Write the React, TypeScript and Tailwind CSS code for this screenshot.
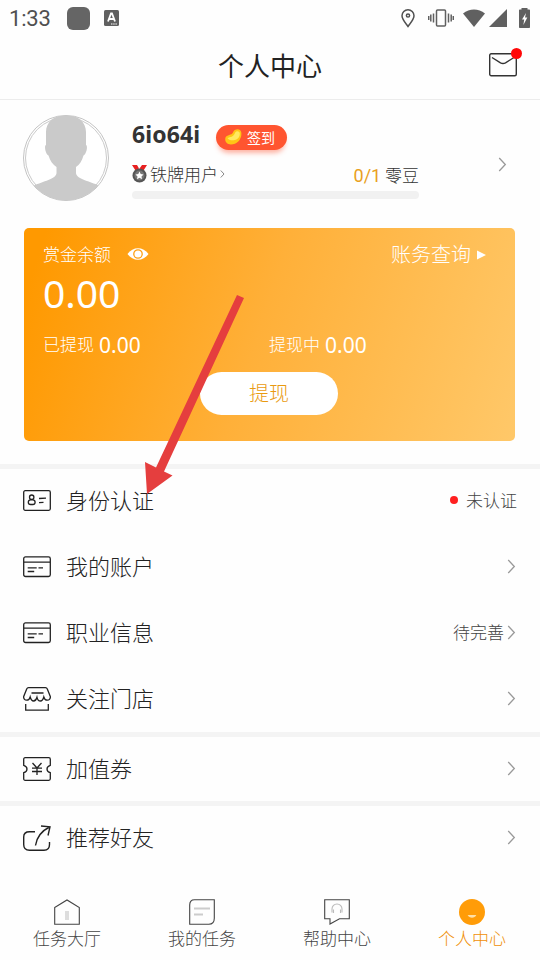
import React from 'react';

type IconProps = { className?: string };

const Chevron: React.FC<IconProps> = ({ className }) => (
  <svg viewBox="0 0 9 16" fill="none" stroke="currentColor" strokeWidth="1.400" className={className}>
    <path d="M1 1l6.500 7L1 15" />
  </svg>
);

const IdCardIcon = () => (
  <svg viewBox="0 0 28 24" fill="none" stroke="#222" strokeWidth="1.300" className="w-7 h-6">
    <rect x="0.700" y="1.700" width="26.600" height="19.600" rx="1.500" />
    <circle cx="8.700" cy="8.200" r="2.200" />
    <rect x="5.300" y="10.900" width="6.800" height="4.600" rx="2.300" />
    <path d="M16 9.500l7-.4M16 13.700l4.500-.3" />
  </svg>
);

const CardIcon = () => (
  <svg viewBox="0 0 28 24" fill="none" stroke="#222" strokeWidth="1.300" className="w-7 h-6">
    <rect x="0.700" y="1.900" width="26.600" height="19.600" rx="1.800" />
    <path d="M1 7.200h26M4.700 12.900h9M15.500 12.900h4.500M4.700 16.500h6.500" />
  </svg>
);

const StoreIcon = () => (
  <svg viewBox="0 0 28 24" fill="none" stroke="#222" strokeWidth="1.300" className="w-7 h-6">
    <path d="M5.500 0.700h17c1 0 1.400.3 1.800 1.200l3 7.500c.4 2-1 3.800-3 3.800-2 0-3-1.300-3.500-3.200-.6 2.200-1.700 4-3.400 4s-2.900-1.600-3.400-3.700c-.6 2.100-1.700 3.700-3.400 3.700s-2.800-1.800-3.400-4c-.5 1.900-1.600 3.200-3.500 3.200-2 0-3.400-1.800-3-3.800l3-7.500C4.100 1 4.600.7 5.500.7z" />
    <path d="M8.500 6h12M2.700 17v6.200h22.600V17" />
  </svg>
);

const CouponIcon = () => (
  <svg viewBox="0 0 28 24" fill="none" stroke="#222" strokeWidth="1.300" className="w-7 h-6">
    <path d="M.7 8.300V2.200C.7 1.300 1.200.7 2.200.7h23.600c1 0 1.500.6 1.500 1.500v6.100c-2 .6-3.300 2-3.300 3.700s1.300 3.100 3.300 3.700v6.100c0 .9-.5 1.500-1.500 1.500H2.200c-1 0-1.500-.6-1.500-1.500v-6.100C2.700 15.100 4 13.700 4 12S2.700 8.900.7 8.300z" />
    <path d="M9.500 6l4.500 5 4.500-5M9 11.200h10M9 14.500h10M14 11v7" />
  </svg>
);

const ShareIcon = () => (
  <svg viewBox="0 0 28 26" fill="none" stroke="#222" strokeWidth="1.400" className="w-7 h-[26px]">
    <path d="M12 6.700H6.500C3 6.700.7 8.500.7 12v7.500c0 3.500 2.300 5.800 5.800 5.800H21c3.500 0 5.500-2.300 5.500-5.800V17" />
    <path d="M12.500 20.500c1-7 5-14 14-18.500M18 1l9 .8-2 8.700" />
  </svg>
);

const StatusBar = () => (
  <div className="flex h-9 items-center justify-between pl-[9px] pr-[10px] font-[Roboto]">
    <div className="flex items-center">
      <span className="mt-[2px] w-[42px] text-[22px] leading-9 tracking-[-0.2px] text-[#505050]">1:33</span>
      <span className="ml-4 size-[23px] rounded-[6px] bg-[#656565]" />
      <svg viewBox="0 0 15 16" className="ml-[14px] h-4 w-[15px]">
        <rect width="15" height="16" rx="1.500" fill="#606060" />
        <path d="M4 11.500l3-8h1l3 8M5.200 9h4.800" fill="none" stroke="#fff" strokeWidth="1.800" />
        <path d="M7 14h6.500" stroke="#fff" strokeDasharray="1.500 .7" />
      </svg>
    </div>
    <div className="flex items-center text-[#606060]">
      <svg viewBox="0 0 14 19" fill="none" stroke="#505050" strokeWidth="1.500" className="h-[19px] w-[14px]">
        <path d="M7 17.500C4.500 14 1 10.400 1 6.800a6 6 0 0 1 12 0c0 3.600-3.500 7.200-6 10.700z" />
        <circle cx="7" cy="6.500" r="1.600" />
      </svg>
      <svg viewBox="0 0 26 18" fill="none" stroke="currentColor" strokeWidth="1.500" className="ml-[13px] h-[18px] w-[26px]">
        <rect x="8.500" y="1" width="9" height="16" rx="1" />
        <path d="M5.500 4.500v9M2.800 5.500v7M.7 7v4M20.500 4.500v9M23.200 5.500v7M25.300 7v4" />
      </svg>
      <svg viewBox="0 0 22 18" fill="currentColor" className="ml-[9px] h-[18px] w-[22px]">
        <path d="M0 4.500C6.500-1 15.500-1 22 4.500L11 18z" />
      </svg>
      <svg viewBox="0 0 18 18" fill="currentColor" className="ml-1 size-[18px]">
        <path d="M18 0v18H0z" />
      </svg>
      <svg viewBox="0 0 11 20" className="ml-3 h-5 w-[11px]">
        <path d="M2.500 0h6v1.500H10c.6 0 1 .4 1 1V19c0 .6-.4 1-1 1H1c-.6 0-1-.4-1-1V2.500c0-.6.4-1 1-1h1.500z" fill="currentColor" />
        <path d="M7 5L3 11.500h2.200L4.400 17 8.300 9.500H6z" fill="#fff" />
      </svg>
    </div>
  </div>
);

const Header = () => (
  <header className="relative flex h-16 items-center justify-center border-b border-[#ececec] pb-[5px]">
    <h1 className="text-[26px] leading-10 text-[#222]">个人中心</h1>
    <div className="absolute right-[23px] top-[17px]">
      <svg viewBox="0 0 28 24" fill="none" stroke="#333" strokeWidth="1.400" className="h-6 w-7">
        <rect x="0.700" y="0.700" width="26.600" height="22" rx="1.500" />
        <path d="M3 4.500l8.500 5.300c1.700.9 3.300.9 5 0L25 4.500" />
      </svg>
      <span className="absolute -right-[5px] -top-[5px] size-[11px] rounded-full bg-[#ff0808]" />
    </div>
  </header>
);

const Avatar = () => (
  <svg viewBox="0 0 88 88" className="size-[88px]">
    <defs>
      <clipPath id="avatar">
        <circle cx="44" cy="44" r="42.500" />
      </clipPath>
    </defs>
    <circle cx="44" cy="44" r="42.500" fill="#fff" stroke="#c4c4c4" />
    <circle cx="44" cy="44" r="40.500" fill="none" stroke="#cacaca" />
    <path
      clipPath="url(#avatar)"
      fill="#cacaca"
      d="M44 1C32 1 24 8 24 18v13c-2 .5-.7 8.500 2.500 10.500C28 47 31 50.500 34.500 53v6c0 6-14 8.500-22.500 12.500V88h65V71.500C68.500 67.500 54 65 54 59v-6c3.500-2.500 6-6 7.500-11.500C64.700 39.500 66 31.500 64 31V18C64 8 56 1 44 1z"
    />
  </svg>
);

const Profile = () => (
  <section className="flex h-32 pl-[22px] pr-[33px] pt-[14px]">
    <Avatar />
    <div className="ml-[22px] w-[287px] pt-1">
      <div className="flex items-center">
        <span className="w-[84px] font-['Noto_Sans'] text-[23px] font-bold leading-8 tracking-[0.1px] text-[#333]">
          6io64i
        </span>
        <span className="mt-[6px] flex h-[25px] w-[71px] items-center rounded-full bg-[#ff5530] pb-px pl-[9px] text-sm text-white shadow-[0_5px_5px_-2px_rgba(255,85,48,0.45)]">
          <svg viewBox="0 0 17 16" className="mr-[5px] h-4 w-[17px]">
            <path d="M8 3.500C9.500-.5 15.500-1 16.300 3.500 17.200 10 12 15.500 6 15.500 1 15.500-.5 11.500.5 8.500 1.800 5.500 6.500 6.500 8 3.500z" fill="#ffc516" />
            <path d="M10 4c1-2.500 4.300-2.300 4.800.2.300 3.500-2 6-5 6.800C7 11.800 3.500 11 2.500 9 5.500 8 8.500 8 10 4z" fill="#ffe960" />
          </svg>
          签到
        </span>
      </div>
      <div className="mt-3 flex h-6 items-center justify-between text-[17px] font-light text-[#333]">
        <span className="flex items-center">
          <svg viewBox="0 0 15 18" className="mr-[3px] h-[18px] w-[15px]">
            <path d="M0 0h5l2 3.500L3.500 5.500zM15 0h-5L7.500 3.500l4 2z" fill="#e82020" />
            <circle cx="7.500" cy="10.500" r="7" fill="#555" />
            <circle cx="7.500" cy="10.500" r="5" fill="#777" />
            <path d="M7.500 6.500l1.200 2.500 2.800.4-2 2 .5 2.800-2.500-1.400L5 14.200l.5-2.800-2-2 2.800-.4z" fill="#fff" />
          </svg>
          铁牌用户
          <Chevron className="ml-[2px] h-[8px] w-[5px] text-[#555]" />
        </span>
        <span className="pt-1">
          <span className="font-[Roboto] text-lg font-normal text-[#e9a020]">0/1</span> 零豆
        </span>
      </div>
      <div className="mt-[5px] h-2 rounded-full bg-[#f1f1f1]" />
    </div>
    <Chevron className="ml-auto mt-[43px] h-[15px] w-[9px] text-[#999]" />
  </section>
);

const BalanceCard = () => (
  <section className="ml-6 h-[213px] w-[491px] rounded-[5px] bg-[linear-gradient(108deg,#ff9900_4%,#ffb039_48%,#ffc869_100%)] px-[19px] pt-3 text-white">
    <div className="flex h-7 items-center text-[17px] font-light">
      <span>赏金余额</span>
      <svg viewBox="0 0 22 14" className="ml-4 h-[14px] w-[22px]">
        <path d="M.5 7C6-.7 16-.7 21.500 7 16 14.700 6 14.700.5 7z" fill="#fff" />
        <circle cx="11" cy="7" r="4.200" fill="none" stroke="#ffa112" strokeWidth="1.300" />
      </svg>
      <span className="ml-auto text-xl">账务查询</span>
      <svg viewBox="0 0 9 10" className="ml-[6px] mr-[10px] mt-[2px] h-[10px] w-[9px]">
        <path d="M0 .5L9 5 0 9.500z" fill="#fff" />
      </svg>
    </div>
    <div className="-mt-[2px] font-['Noto_Sans'] text-[39px] leading-[54px]">0.00</div>
    <div className="mt-[10px] flex h-7 items-center text-[17px] font-light">
      <span className="flex w-[226px] items-center">
        已提现
        <span className="ml-[5px] mt-[3px] font-['Noto_Sans'] text-[21px] font-normal">0.00</span>
      </span>
      <span className="flex items-center">
        提现中
        <span className="ml-[5px] mt-[3px] font-['Noto_Sans'] text-[21px] font-normal">0.00</span>
      </span>
    </div>
    <button className="ml-[157px] mt-[14px] h-[43px] w-[138px] rounded-full bg-white pb-[2px] text-xl font-light text-[#e99a10]">
      提现
    </button>
  </section>
);

interface Row {
  label: string;
  icon: React.ReactNode;
  note?: string;
  alert?: boolean;
}

const GROUPS: { id: string; className: string; rows: Row[] }[] = [
  {
    id: 'account',
    className: 'mt-[23px] border-t-[5px] pb-4',
    rows: [
      { label: '身份认证', icon: <IdCardIcon />, note: '未认证', alert: true },
      { label: '我的账户', icon: <CardIcon /> },
      { label: '职业信息', icon: <CardIcon />, note: '待完善' },
      { label: '关注门店', icon: <StoreIcon /> },
    ],
  },
  { id: 'coupon', className: 'border-t-[5px] pb-[15px]', rows: [{ label: '加值券', icon: <CouponIcon /> }] },
  { id: 'invite', className: 'border-t-[5px]', rows: [{ label: '推荐好友', icon: <ShareIcon /> }] },
];

const MenuRow: React.FC<{ row: Row }> = ({ row }) => (
  <div className="flex h-9 items-center">
    <span className="pt-px">{row.icon}</span>
    <span className="ml-[15px] pb-[2px] text-[22px] font-light text-[#222]">{row.label}</span>
    <div className="ml-auto flex items-center text-[17px] font-light text-[#444]">
      {row.alert && <span className="mr-2 size-2 rounded-full bg-[#ff2020]" />}
      {row.note}
      {!row.alert && <Chevron className="ml-[3px] mr-px h-[15px] w-[9px] text-[#999]" />}
    </div>
  </div>
);

const TABS = [
  {
    label: '任务大厅',
    active: false,
    icon: (
      <>
        <path d="M.7 8.500L13 1l12.300 7.500v16.800H.7z" />
        <path d="M13 12v9" stroke="#ddd" strokeWidth="4" />
      </>
    ),
  },
  {
    label: '我的任务',
    active: false,
    icon: (
      <>
        <path d="M5.500.7h19.800v18.600c0 4-2 6-5.500 6H.7V6C.7 2.500 2.500.7 5.500.7z" />
        <path d="M5 9.500h16M5 15.500h9" stroke="#ccc" strokeWidth="1.800" />
      </>
    ),
  },
  {
    label: '帮助中心',
    active: false,
    icon: (
      <>
        <path d="M.7.7h24.600v19H15.500L6 25v-5.300H.7z" />
        <path d="M8 13.500V10a5 5 0 0 1 10 0v3.500M9.500 10.500v3.500M16.500 10.500v3.500" stroke="#bbb" />
      </>
    ),
  },
  {
    label: '个人中心',
    active: true,
    icon: (
      <>
        <circle cx="13" cy="13" r="13" fill="#ff9c08" stroke="none" />
        <path d="M8.700 16c1.500 3.600 7.100 3.600 8.600 0z" fill="#ffe0a8" stroke="none" />
      </>
    ),
  },
];

const TabBar = () => (
  <nav className="mt-auto grid h-[74px] grid-cols-4 pt-[13px]">
    {TABS.map((tab) => (
      <div key={tab.label} className="-ml-px flex flex-col items-center">
        <svg viewBox="0 0 26 26" fill="none" stroke="#444" strokeWidth="1.100" className="size-[26px]">
          {tab.icon}
        </svg>
        <span className={`text-[17px] font-light leading-[26px] ${tab.active ? 'text-[#f09008]' : 'text-[#444]'}`}>
          {tab.label}
        </span>
      </div>
    ))}
  </nav>
);

const App: React.FC = () => {
  return (
    <div className="relative flex h-[960px] w-[540px] flex-col overflow-hidden bg-[#fefefe] font-['Noto_Sans_CJK_SC',sans-serif]">
      <StatusBar />
      <Header />
      <Profile />
      <BalanceCard />
      {GROUPS.map((group) => (
        <section
          key={group.id}
          className={`flex flex-col gap-[30px] border-[#f4f4f4] px-[23px] pt-[13px] ${group.className}`}
        >
          {group.rows.map((row) => (
            <MenuRow key={row.label} row={row} />
          ))}
        </section>
      ))}
      <TabBar />

      {/* Pointer to the identity row */}
      <svg viewBox="0 0 100 200" className="pointer-events-none absolute left-[144px] top-[294px] h-[200px] w-[100px]">
        <path d="M93 1l7 3-80 173.500 8.500 4L3 200 1 168l11 5.500z" fill="#e53e3e" />
      </svg>
    </div>
  );
};

export default App;
